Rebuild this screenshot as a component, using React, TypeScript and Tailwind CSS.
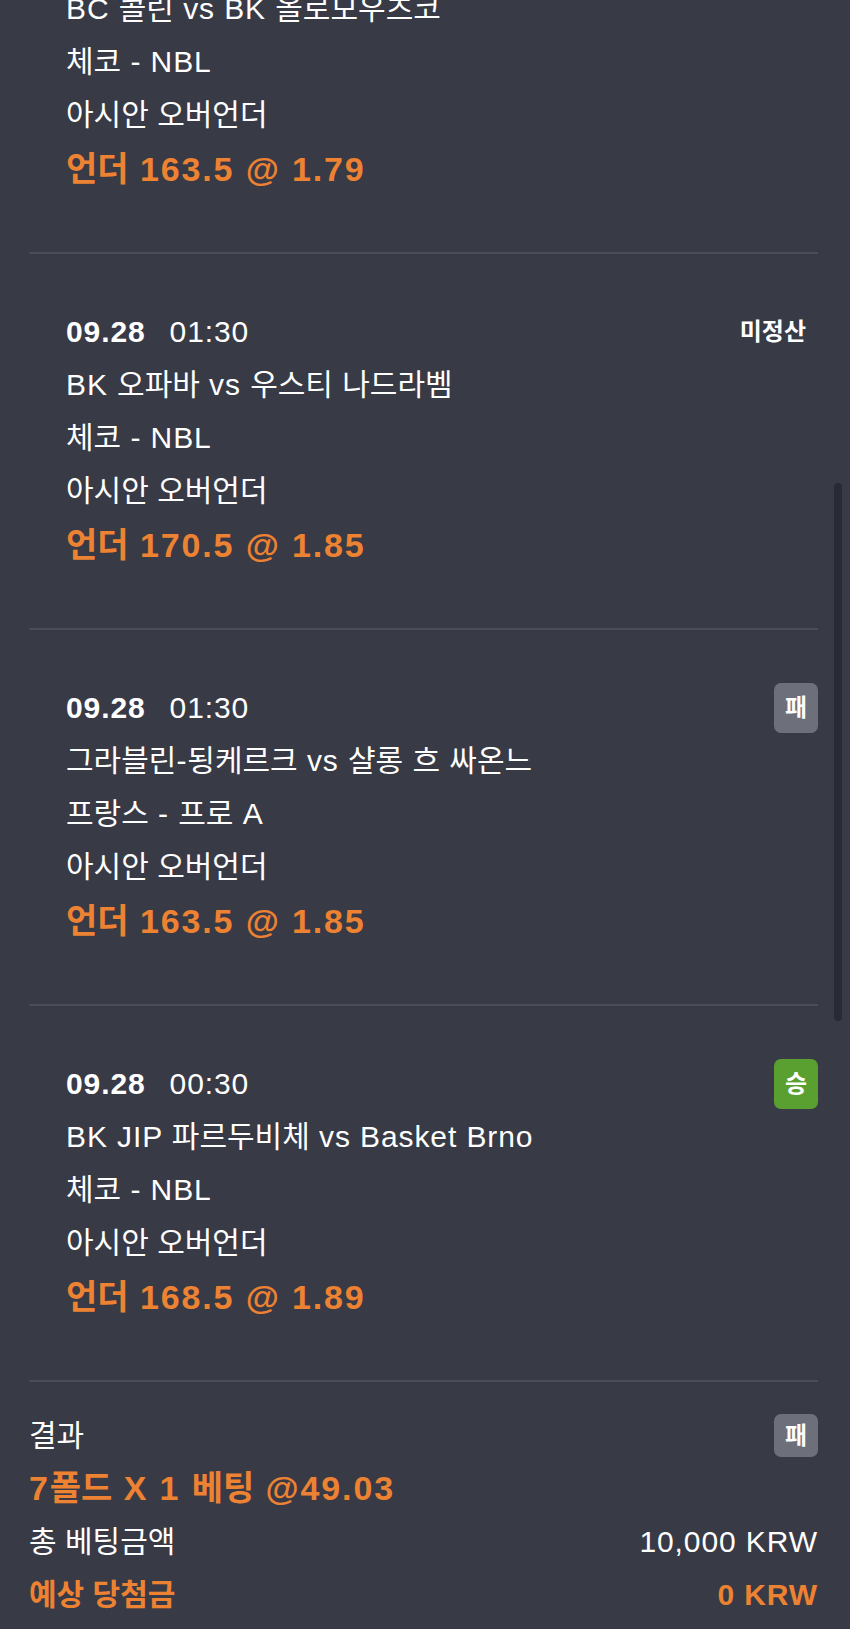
type Status = 'pending' | 'lose' | 'win';

interface Bet {
  date: string;
  time: string;
  match: string;
  league: string;
  market: string;
  pick: string;
  status: Status;
}

const bets: Bet[] = [
  { date: '09.28', time: '01:30', match: 'BC 콜린 vs BK 올로모우츠코', league: '체코 - NBL', market: '아시안 오버언더', pick: '언더 163.5 @ 1.79', status: 'pending' },
  { date: '09.28', time: '01:30', match: 'BK 오파바 vs 우스티 나드라벰', league: '체코 - NBL', market: '아시안 오버언더', pick: '언더 170.5 @ 1.85', status: 'pending' },
  { date: '09.28', time: '01:30', match: '그라블린-됭케르크 vs 샬롱 흐 싸온느', league: '프랑스 - 프로 A', market: '아시안 오버언더', pick: '언더 163.5 @ 1.85', status: 'lose' },
  { date: '09.28', time: '00:30', match: 'BK JIP 파르두비체 vs Basket Brno', league: '체코 - NBL', market: '아시안 오버언더', pick: '언더 168.5 @ 1.89', status: 'win' },
];

// Latin runs get a little tracking so they come out as wide as the original's Helvetica
function Mixed({ text, latin }: { text: string; latin: string }) {
  const parts = text.split(/([\uAC00-\uD7A3]+)/).filter(Boolean);
  return (
    <>
      {parts.map((p, i) =>
        /[\uAC00-\uD7A3]/.test(p) ? <span key={i}>{p}</span> : <span key={i} className={latin}>{p}</span>
      )}
    </>
  );
}

function StatusBadge({ status, small }: { status: Status; small?: boolean }) {
  if (status === 'pending') {
    return <span className="pr-[12px] text-[24px] font-bold leading-none text-white">미정산</span>;
  }
  const color = status === 'win' ? 'bg-[#5aa031]' : 'bg-[#6d707b]';
  return (
    <span className={`flex w-[44px] items-center justify-center rounded-[7px] text-[24px] font-bold text-white ${color} ${small ? 'h-[43px]' : 'h-[50px]'}`}>
      {status === 'win' ? '승' : '패'}
    </span>
  );
}

// the first card is scrolled past its header, so it starts at the match line
function BetItem({ bet, scrolled }: { bet: Bet; scrolled?: boolean }) {
  return (
    <div className={`pb-[55px] pl-[37px] ${scrolled ? '' : 'pt-[51px]'}`}>
      {!scrolled && (
        <div className="flex h-[53px] items-center justify-between">
          <div className="flex items-center tracking-[0.03em]">
            <span className="font-bold">{bet.date}</span>
            <span className="ml-[24px]">{bet.time}</span>
          </div>
          <StatusBadge status={bet.status} />
        </div>
      )}
      <div className="leading-[53px]"><Mixed text={bet.match} latin="tracking-[0.03em]" /></div>
      <div className="leading-[53px]"><Mixed text={bet.league} latin="tracking-[0.03em]" /></div>
      <div className="leading-[53px]">{bet.market}</div>
      <div className="text-[34px] font-bold leading-[56px] text-[#ec8232]">
        <Mixed text={bet.pick} latin="tracking-[0.055em]" />
      </div>
    </div>
  );
}

function Divider() {
  return <div className="h-[2px] bg-[#4a4d59]" />;
}

export default function App() {
  return (
    <div className="relative h-[1629px] w-full overflow-hidden bg-[#383a46] font-['Liberation_Sans','Noto_Sans_CJK_KR',sans-serif] text-[30px] text-white">
      <div className="-mt-[18px] pl-[29px] pr-[32px]">
        {bets.map((bet, i) => (
          <div key={i}>
            {i > 0 && <Divider />}
            <BetItem bet={bet} scrolled={i === 0} />
          </div>
        ))}
        <Divider />
        <div className="pt-[27px]">
          <div className="flex h-[53px] items-center justify-between">
            <span>결과</span>
            <StatusBadge status="lose" small />
          </div>
          <div className="text-[34px] font-bold leading-[53px] text-[#ec8232]">
            <Mixed text="7폴드 X 1 베팅 @49.03" latin="tracking-[0.055em]" />
          </div>
          <div className="flex h-[53px] items-center justify-between">
            <span>총 베팅금액</span>
            <span className="tracking-[0.03em]">10,000 KRW</span>
          </div>
          <div className="flex h-[53px] items-center justify-between font-bold text-[#ec8232]">
            <span>예상 당첨금</span>
            <span className="tracking-[0.03em]">0 KRW</span>
          </div>
        </div>
      </div>
      <div className="absolute left-[834px] top-[483px] h-[538px] w-[8px] rounded-full bg-[#292b34]" />
    </div>
  );
}
